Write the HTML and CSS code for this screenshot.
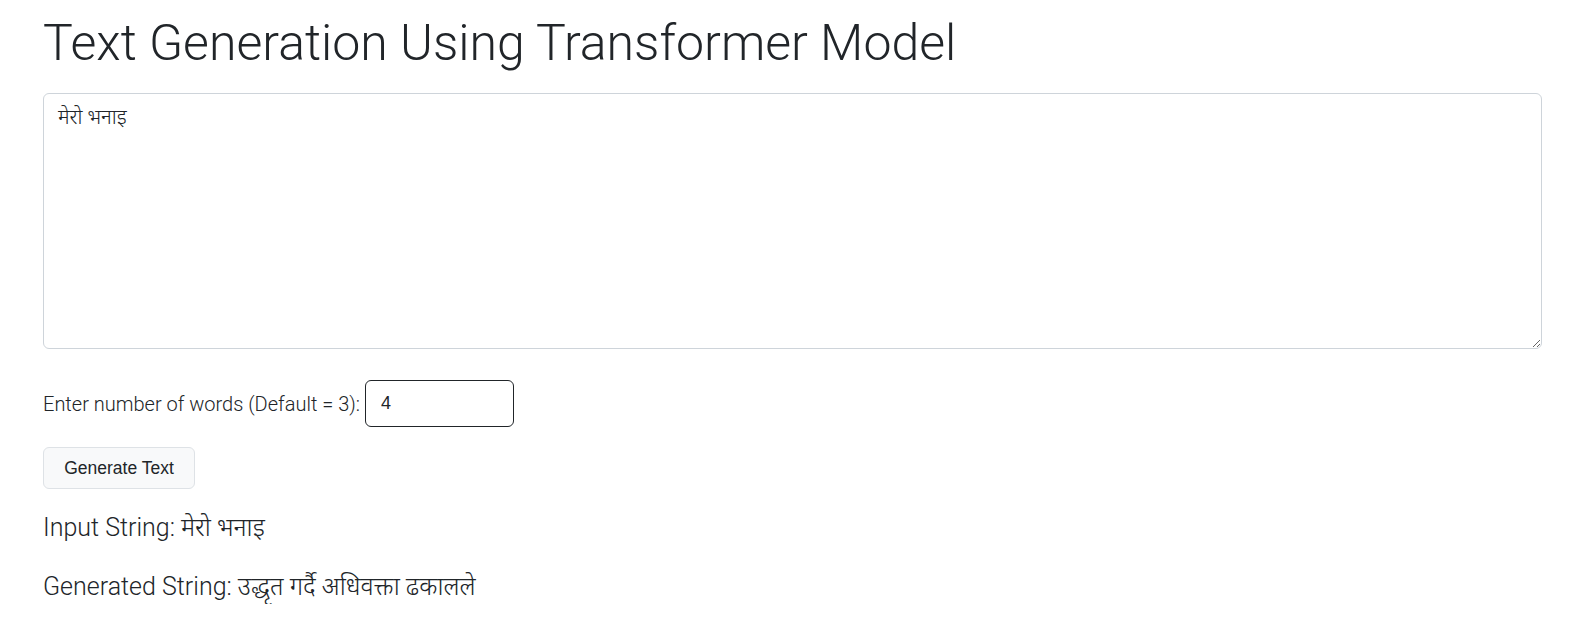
FILE: index.html
```html
<!DOCTYPE html>
<html lang="ne">
<head>
<meta charset="utf-8">
<title>Text Generation Using Transformer Model</title>
<link rel="stylesheet" href="styles.css">
</head>
<body>
<main class="page">
  <h1 class="title">Text Generation Using Transformer Model</h1>
  <form class="gen-form">
    <textarea class="prompt" name="prompt">मेरो भनाइ</textarea>
    <div class="words-row">
      <label class="words-label" for="words">Enter number of words (Default = 3):</label>
      <input class="words-input" id="words" type="text" value="4">
    </div>
    <button class="gen-btn" type="button">Generate Text</button>
  </form>
  <p class="result">Input String: मेरो भनाइ</p>
  <p class="result">Generated String: उद्धृत गर्दै अधिवक्ता ढकालले</p>
</main>
</body>
</html>
```

FILE: styles.css
```css
html, body {
  margin: 0;
  padding: 0;
  background: #ffffff;
}

body {
  font-family: Roboto, "Noto Sans", sans-serif;
  font-weight: 300;
  color: #212529;
}

.page {
  padding: 0 53px 0 43px;
}

.title {
  margin: 0;
  padding-top: 13px;
  font-size: 50px;
  font-weight: 300;
  line-height: 60px;
  color: #212529;
}

.gen-form {
  display: flex;
  flex-direction: column;
  align-items: flex-start;
}

.prompt {
  box-sizing: border-box;
  margin-top: 20px;
  width: 100%;
  height: 256px;
  padding: 8px 14px;
  border: 1px solid #ced4da;
  border-radius: 6px;
  font-family: Roboto, "Noto Sans", sans-serif;
  font-size: 20.5px;
  font-weight: 300;
  color: #212529;
  resize: vertical;
}

.words-row {
  display: flex;
  align-items: center;
  gap: 5px;
  margin-top: 31px;
}

.words-label {
  font-size: 20px;
  font-weight: 300;
  color: #212529;
}

.words-input {
  box-sizing: border-box;
  width: 149px;
  height: 47px;
  padding: 0 15px;
  border: 1px solid #212529;
  border-radius: 6px;
  font-family: "Liberation Sans", Arial, sans-serif;
  font-size: 18px;
  color: #212529;
}

.gen-btn {
  box-sizing: border-box;
  margin-top: 20px;
  width: 152px;
  height: 42px;
  background: #f8f9fa;
  border: 1px solid #dee2e6;
  border-radius: 6px;
  font-family: "Liberation Sans", Arial, sans-serif;
  font-size: 17.5px;
  color: #212529;
}

.result {
  margin: 22px 0 0;
  font-size: 25px;
  font-weight: 300;
  line-height: 34px;
  color: #212529;
}

.result + .result {
  margin-top: 25px;
}
```
